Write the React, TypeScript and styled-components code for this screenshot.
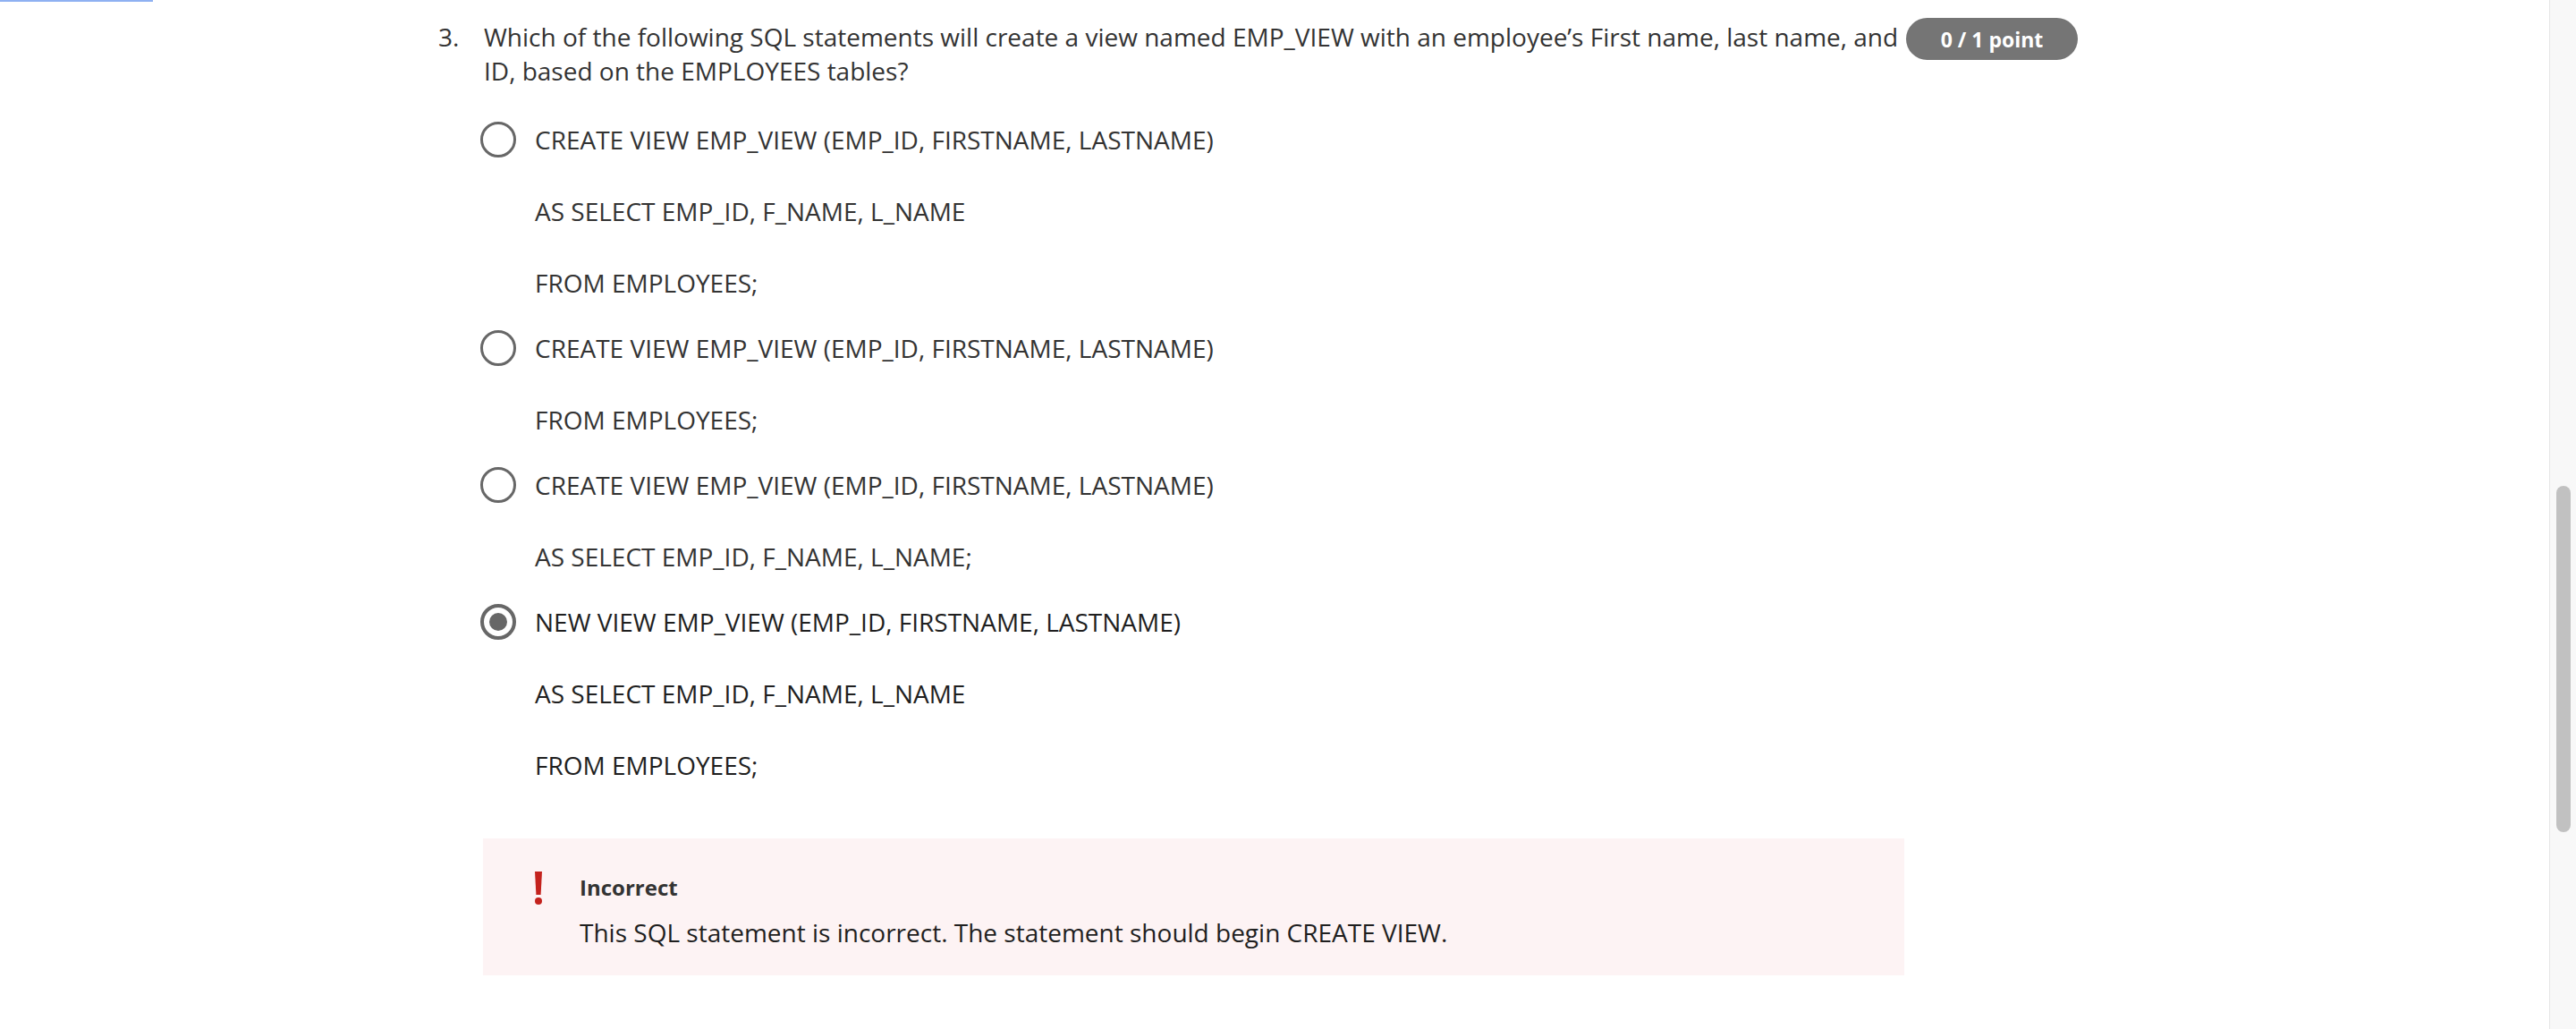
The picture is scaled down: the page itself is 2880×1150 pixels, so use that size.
import React from 'react';
import styled, { createGlobalStyle } from 'styled-components';

const GlobalStyle = createGlobalStyle`
  html, body {
    margin: 0;
    padding: 0;
    background: #ffffff;
  }
  body {
    font-family: "Open Sans", "Noto Sans", sans-serif;
    color: #333333;
  }
`;

const Page = styled.div`
  display: flex;
  height: 1150px;
  overflow: hidden;
`;

const Main = styled.div`
  flex: 1;
  display: flex;
  flex-direction: column;
`;

const ProgressBar = styled.div`
  width: 171px;
  height: 2px;
  background-color: #8fb1f2;
`;

const Content = styled.div`
  margin: 20px 0 0 490px;
  display: flex;
  flex-direction: column;
`;

const QuestionRow = styled.div`
  display: grid;
  grid-template-columns: 43px 1582px auto;
  column-gap: 8px;
  align-items: start;
`;

const QuestionNumber = styled.div`
  font-size: 28px;
  line-height: 38px;
  color: #333333;
`;

const QuestionText = styled.div`
  font-size: 28px;
  line-height: 38px;
  color: #333333;
`;

const PointBadge = styled.div`
  margin-top: -2px;
  width: 192px;
  height: 47px;
  border-radius: 24px;
  background-color: #757575;
  color: #ffffff;
  font-size: 23px;
  font-weight: 700;
  display: flex;
  align-items: center;
  justify-content: center;
`;

const OptionList = styled.div`
  margin: 38px 0 0 47px;
  display: flex;
  flex-direction: column;
  gap: 33px;
`;

const OptionRow = styled.div`
  display: flex;
  align-items: flex-start;
  gap: 21px;
`;

const Radio = styled.div<{ $checked?: boolean }>`
  flex: none;
  box-sizing: border-box;
  width: 40px;
  height: 40px;
  border-radius: 50%;
  border: ${(p) => (p.$checked ? '4px' : '3px')} solid #676767;
  display: flex;
  align-items: center;
  justify-content: center;
  &::after {
    content: '';
    display: ${(p) => (p.$checked ? 'block' : 'none')};
    width: 20px;
    height: 20px;
    border-radius: 50%;
    background-color: #676767;
  }
`;

const OptionLines = styled.div`
  display: flex;
  flex-direction: column;
  gap: 40px;
`;

const OptionLine = styled.div<{ $selected?: boolean }>`
  font-size: 28px;
  line-height: 40px;
  color: ${(p) => (p.$selected ? '#1f1f1f' : '#333333')};
`;

const Feedback = styled.div`
  margin: 62px 0 0 50px;
  width: 1589px;
  box-sizing: border-box;
  padding: 39px 0 28px 57px;
  background-color: #fdf3f4;
  display: flex;
  align-items: flex-start;
  gap: 41px;
`;

const FeedbackIcon = styled.svg`
  flex: none;
  margin-top: -2px;
`;

const FeedbackBody = styled.div`
  display: flex;
  flex-direction: column;
  gap: 14px;
`;

const FeedbackTitle = styled.div`
  font-size: 24px;
  line-height: 32px;
  font-weight: 700;
  color: #333333;
`;

const FeedbackText = styled.div`
  font-size: 28px;
  line-height: 40px;
  color: #1f1f1f;
`;

const ScrollTrack = styled.div`
  flex: none;
  width: 30px;
  box-sizing: border-box;
  border-left: 1px solid #e6e6e6;
  background-color: #f8f8f8;
  padding: 543px 0 0 7px;
`;

const ScrollThumb = styled.div`
  width: 16px;
  height: 387px;
  border-radius: 8px;
  background-color: #c1c1c1;
`;

const options = [
  {
    lines: [
      'CREATE VIEW EMP_VIEW (EMP_ID, FIRSTNAME, LASTNAME)',
      'AS SELECT EMP_ID, F_NAME, L_NAME',
      'FROM EMPLOYEES;',
    ],
  },
  {
    lines: ['CREATE VIEW EMP_VIEW (EMP_ID, FIRSTNAME, LASTNAME)', 'FROM EMPLOYEES;'],
  },
  {
    lines: ['CREATE VIEW EMP_VIEW (EMP_ID, FIRSTNAME, LASTNAME)', 'AS SELECT EMP_ID, F_NAME, L_NAME;'],
  },
  {
    lines: [
      'NEW VIEW EMP_VIEW (EMP_ID, FIRSTNAME, LASTNAME)',
      'AS SELECT EMP_ID, F_NAME, L_NAME',
      'FROM EMPLOYEES;',
    ],
    checked: true,
  },
];

const App = () => {
  return (
    <>
      <GlobalStyle />
      <Page>
        <Main>
          <ProgressBar />
          <Content>
            <QuestionRow>
              <QuestionNumber>3.</QuestionNumber>
              <QuestionText>
                Which of the following SQL statements will create a view named EMP_VIEW with an employee’s First
                name, last name, and ID, based on the EMPLOYEES tables?
              </QuestionText>
              <PointBadge>0 / 1 point</PointBadge>
            </QuestionRow>
            <OptionList>
              {options.map((opt, i) => (
                <OptionRow key={i}>
                  <Radio $checked={opt.checked} />
                  <OptionLines>
                    {opt.lines.map((line, j) => (
                      <OptionLine key={j} $selected={opt.checked}>
                        {line}
                      </OptionLine>
                    ))}
                  </OptionLines>
                </OptionRow>
              ))}
            </OptionList>
            <Feedback>
              <FeedbackIcon width="10" height="38" viewBox="0 0 10 38">
                <path d="M1 0 H9 L7.6 26 H2.4 Z" fill="#c4221d" />
                <circle cx="5" cy="33" r="4" fill="#c4221d" />
              </FeedbackIcon>
              <FeedbackBody>
                <FeedbackTitle>Incorrect</FeedbackTitle>
                <FeedbackText>This SQL statement is incorrect. The statement should begin CREATE VIEW.</FeedbackText>
              </FeedbackBody>
            </Feedback>
          </Content>
        </Main>
        <ScrollTrack>
          <ScrollThumb />
        </ScrollTrack>
      </Page>
    </>
  );
};

export default App;
